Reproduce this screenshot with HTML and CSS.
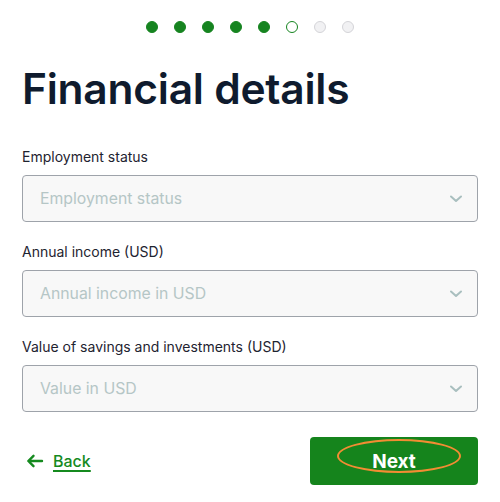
FILE: index.html
```html
<!DOCTYPE html>
<html lang="en">
<head>
<meta charset="utf-8">
<title>Financial details</title>
<link rel="stylesheet" href="styles.css">
</head>
<body>
<main class="page">
  <div class="steps">
    <span class="dot done"></span>
    <span class="dot done"></span>
    <span class="dot done"></span>
    <span class="dot done"></span>
    <span class="dot done"></span>
    <span class="dot current"></span>
    <span class="dot"></span>
    <span class="dot"></span>
  </div>
  <h1 class="title">Financial details</h1>
  <form class="form">
    <div class="field">
      <label class="label">Employment status</label>
      <div class="select">
        <span class="placeholder">Employment status</span>
        <svg class="chev" width="14" height="8" viewBox="0 0 14 8"><path d="M2 1.5 L7 6 L12 1.5" fill="none" stroke="#a9bfbf" stroke-width="2" stroke-linecap="round" stroke-linejoin="round"/></svg>
      </div>
    </div>
    <div class="field">
      <label class="label">Annual income (USD)</label>
      <div class="select">
        <span class="placeholder">Annual income in USD</span>
        <svg class="chev" width="14" height="8" viewBox="0 0 14 8"><path d="M2 1.5 L7 6 L12 1.5" fill="none" stroke="#a9bfbf" stroke-width="2" stroke-linecap="round" stroke-linejoin="round"/></svg>
      </div>
    </div>
    <div class="field">
      <label class="label">Value of savings and investments (USD)</label>
      <div class="select">
        <span class="placeholder">Value in USD</span>
        <svg class="chev" width="14" height="8" viewBox="0 0 14 8"><path d="M2 1.5 L7 6 L12 1.5" fill="none" stroke="#a9bfbf" stroke-width="2" stroke-linecap="round" stroke-linejoin="round"/></svg>
      </div>
    </div>
  </form>
  <div class="actions">
    <a class="back" href="#">
      <svg class="arrow" width="18" height="14" viewBox="0 0 18 14"><path d="M16 7 H2.5 M7.5 1.8 L2.3 7 L7.5 12.2" fill="none" stroke="#158a1f" stroke-width="2.4" stroke-linecap="round" stroke-linejoin="round"/></svg>
      <span class="back-text">Back</span>
    </a>
    <button class="next" type="button">Next</button>
  </div>
</main>
</body>
</html>
```
FILE: styles.css
```css
* { box-sizing: border-box; }
html, body { margin: 0; padding: 0; background: #ffffff; }
body { font-family: Inter, "Noto Sans", sans-serif; color: #1f2328; }
.page { width: 500px; padding: 21px 22px 0 22px; }
.steps { display: flex; justify-content: center; gap: 16px; height: 12px; }
.dot { width: 12px; height: 12px; border-radius: 50%; background: #f1f1f3; border: 1px solid #d4d4d8; }
.dot.done { background: #168420; border-color: #168420; }
.dot.current { background: #fff; border: 1.5px solid #168420; }
.title { margin: 30px 0 0 0; font-size: 42.5px; line-height: 52px; font-weight: 600; color: #0f1b2e; letter-spacing: -0.25px; }
.form { margin-top: 33px; display: flex; flex-direction: column; gap: 21px; }
.field { display: flex; flex-direction: column; gap: 9px; }
.label { font-size: 14px; line-height: 18px; color: #1e2330; }
.select { height: 47px; border: 1px solid #9ea3aa; border-radius: 4px; background: #f8f8f8; display: flex; align-items: center; justify-content: space-between; padding: 0 14px 0 17px; }
.placeholder { font-size: 15.8px; color: #b5c6c6; }
.chev { display: block; }
.actions { margin-top: 25px; display: flex; justify-content: space-between; align-items: center; }
.back { display: flex; align-items: center; gap: 9px; padding-left: 4px; color: #158a1f; text-decoration: none; }
.arrow { display: block; }
.back-text { font-size: 16px; font-weight: 500; text-decoration: underline; text-underline-offset: 3px; text-decoration-thickness: 2px; }
.next { position: relative; width: 168px; height: 48px; border: none; border-radius: 4px; background: #15841c; color: #fff; font-family: Inter, "Noto Sans", sans-serif; font-size: 19px; font-weight: 700; display: flex; align-items: center; justify-content: center; padding: 0; }
.next::after { content: ""; position: absolute; left: 27px; top: 2px; width: 120px; height: 30px; border: 2px solid #f28c33; border-radius: 50%; }
```
